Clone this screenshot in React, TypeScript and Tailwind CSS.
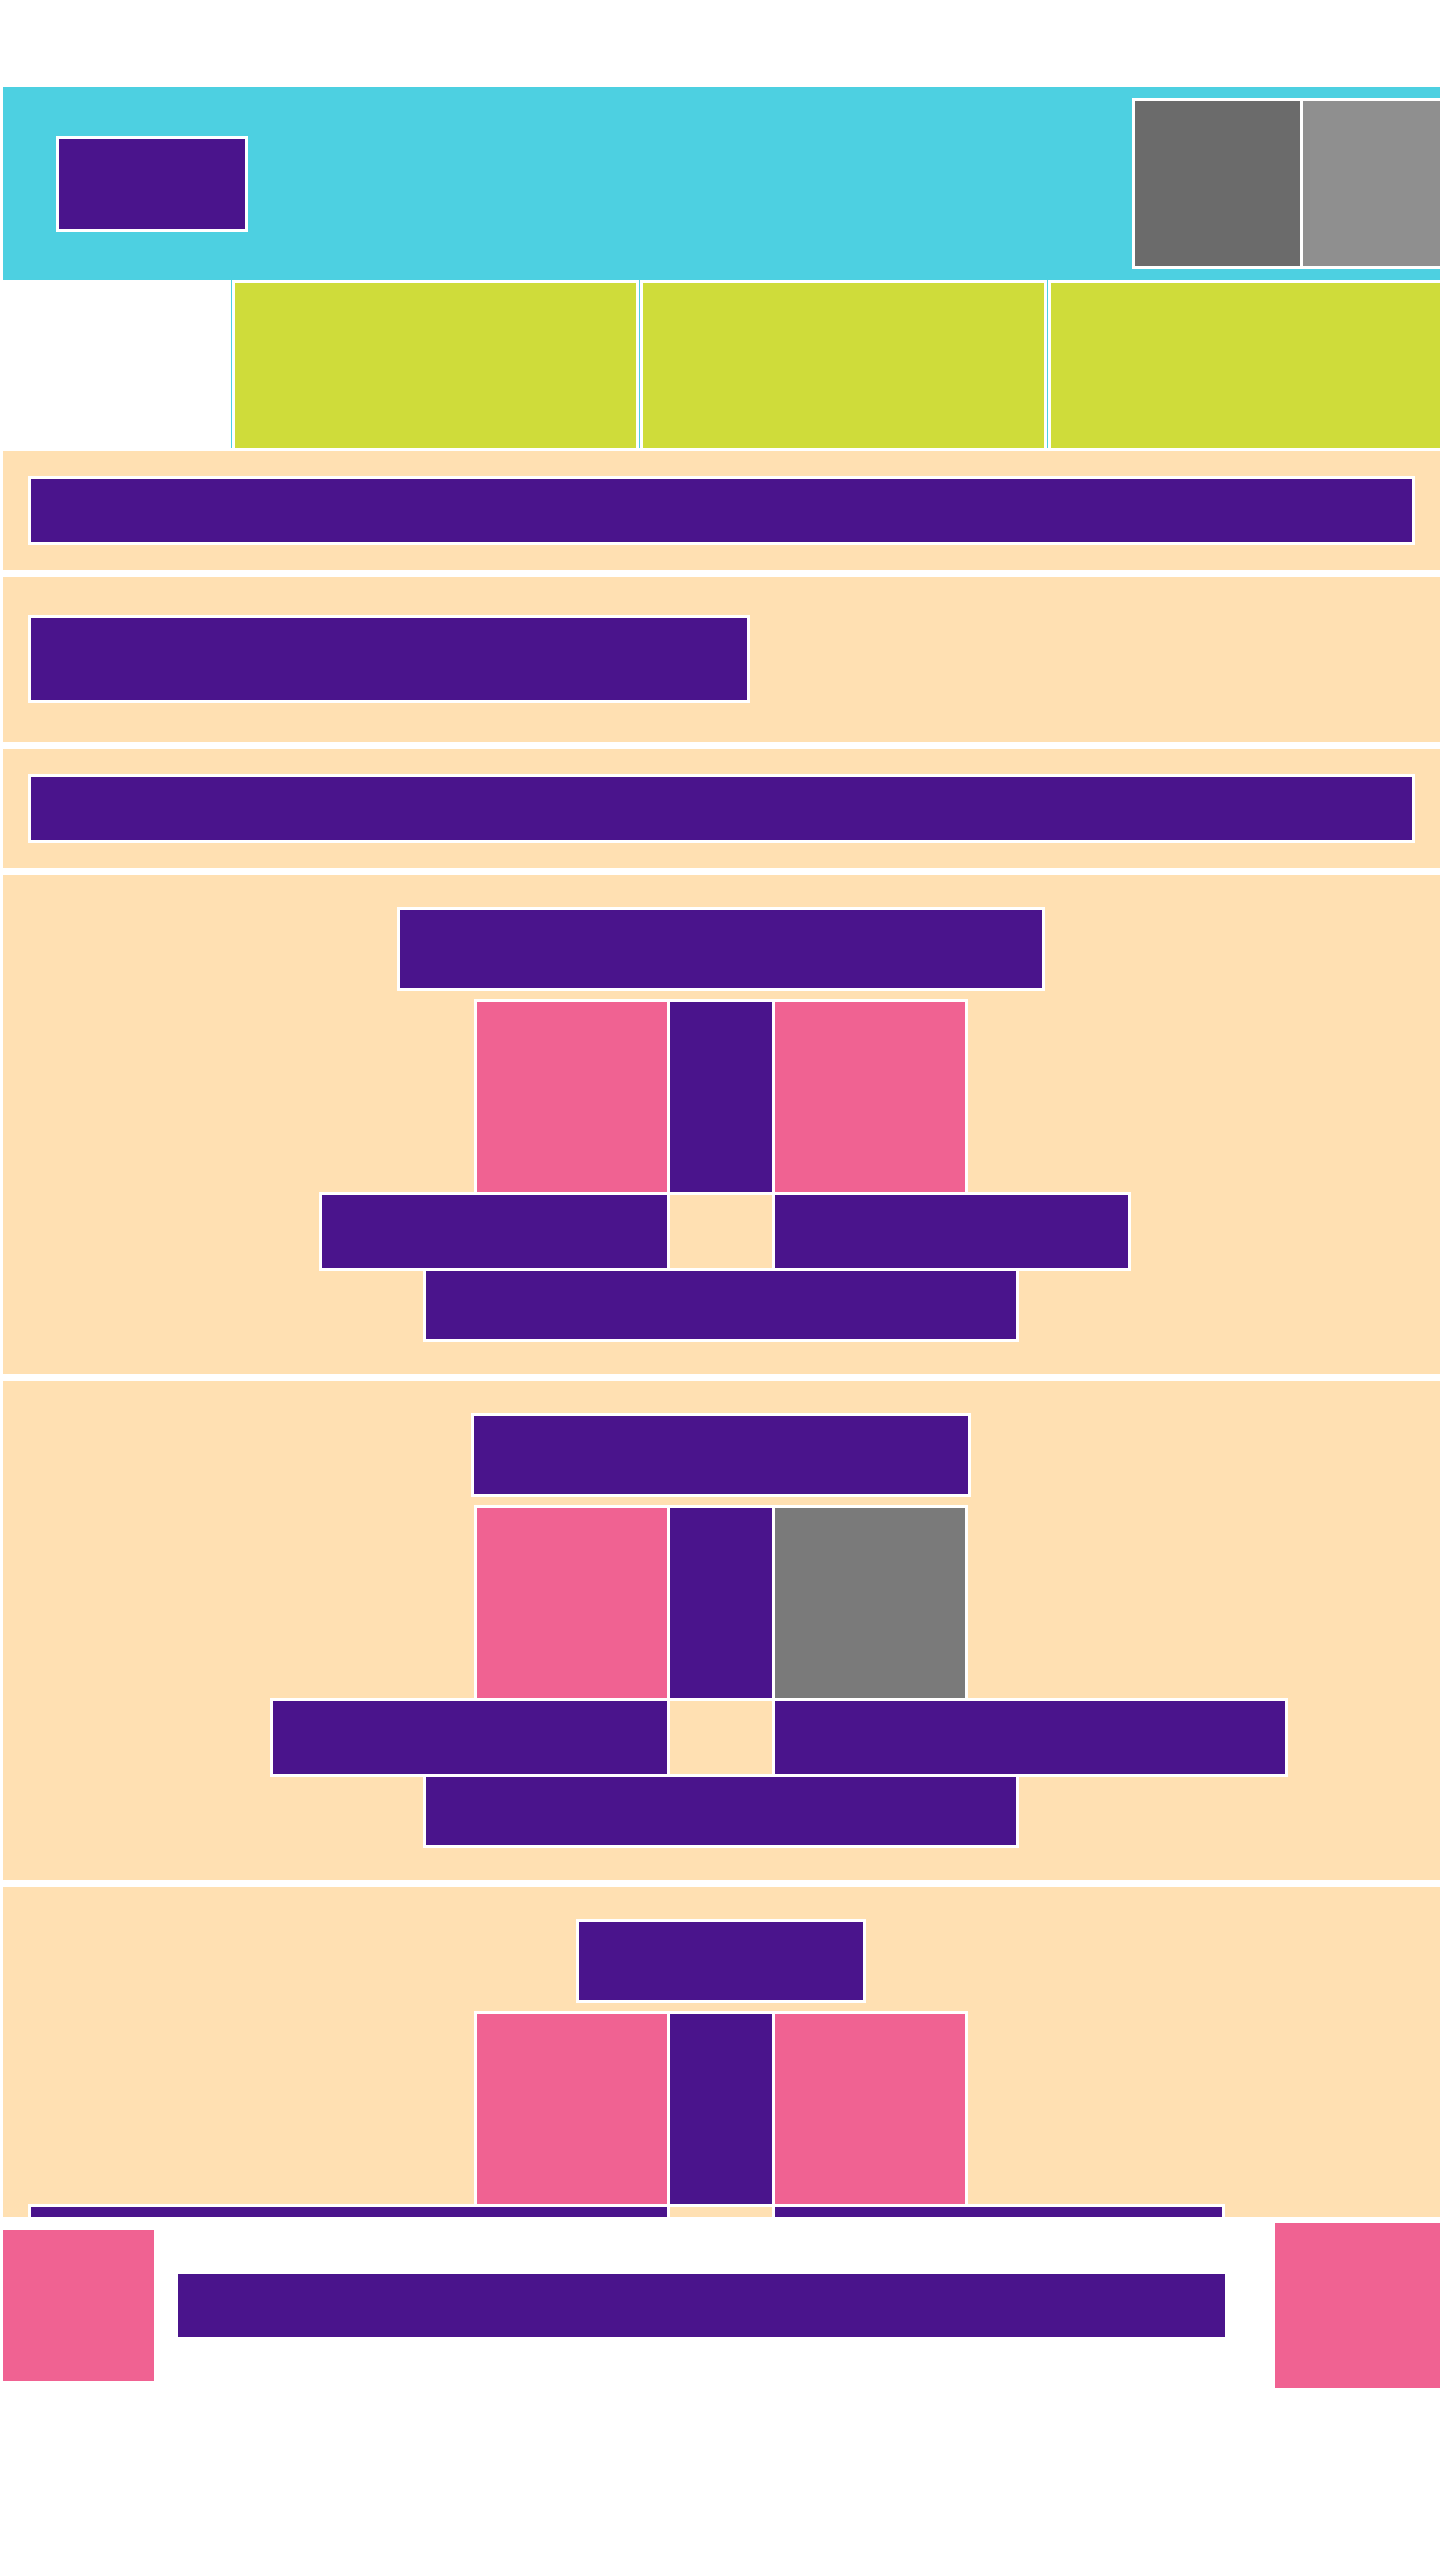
const purple = 'bg-[#4a148c]'
const pink = 'bg-[#f06292]'

function Box({ className = '' }: { className?: string }) {
  return <div className={`shrink-0 border-[3px] border-white ${className}`} />
}

type FigureProps = {
  titleWidth: string
  rightTop: string
  leftBottom: string
  rightBottom: string
  clipped?: boolean
}

function Figure({ titleWidth, rightTop, leftBottom, rightBottom, clipped }: FigureProps) {
  return (
    <section className={`mt-[7px] bg-[#ffe0b2] pt-[32px] ${clipped ? 'h-[330px] overflow-hidden' : 'pb-[32px]'}`}>
      <div className="flex w-[1436px] flex-col items-center">
        <Box className={`${titleWidth} h-[84px] ${purple}`} />

        {/* top row */}
        <div className="mt-[8px] grid w-full grid-cols-[667px_102px_667px]">
          <div className="flex justify-end">
            <Box className={`h-[196px] w-[196px] ${pink}`} />
          </div>
          <Box className={`-mx-[3px] h-[196px] ${purple}`} />
          <div className="flex justify-start">
            <Box className={`h-[196px] w-[196px] ${rightTop}`} />
          </div>
        </div>

        {/* bottom row */}
        <div className="-mt-[3px] grid w-full grid-cols-[667px_102px_667px]">
          <div className="flex justify-end">
            <Box className={`${leftBottom} h-[79px] ${purple}`} />
          </div>
          <div />
          <div className="flex justify-start">
            <Box className={`${rightBottom} h-[79px] ${purple}`} />
          </div>
        </div>

        <Box className={`-mt-[3px] h-[74px] w-[596px] ${purple}`} />
      </div>
    </section>
  )
}

export default function App() {
  return (
    <div className="min-h-[2560px] w-[1440px] overflow-hidden bg-white pl-[3px] pt-[87px]">

      {/* Header */}
      <header className="flex h-[193px] items-center bg-[#4dd0e1] pl-[53px]">
        <Box className={`h-[96px] w-[192px] ${purple}`} />
        <div className="ml-[884px] flex shrink-0 gap-[3px] bg-white p-[3px]">
          <div className="h-[165px] w-[165px] bg-[#6b6b6b]" />
          <div className="h-[165px] w-[165px] bg-[#8f8f8f]" />
        </div>
      </header>

      {/* Nav */}
      <nav className="flex h-[171px] pl-[228px]">
        {[0, 1, 2].map((i) => (
          <div key={i} className="flex shrink-0 items-start">
            <div className="h-[168px] w-px bg-[#4dd0e1]" />
            <Box className="h-[171px] w-[407px] bg-[#cfdc3a]" />
          </div>
        ))}
      </nav>

      {/* Bars */}
      <section className="bg-[#ffe0b2] p-[25px]">
        <Box className={`h-[69px] w-full ${purple}`} />
      </section>
      <section className="mt-[7px] bg-[#ffe0b2] px-[25px] pb-[39px] pt-[38px]">
        <Box className={`h-[88px] w-[722px] ${purple}`} />
      </section>
      <section className="mt-[7px] bg-[#ffe0b2] p-[25px]">
        <Box className={`h-[69px] w-full ${purple}`} />
      </section>

      {/* Figures */}
      <Figure titleWidth="w-[648px]" rightTop={pink} leftBottom="w-[351px]" rightBottom="w-[359px]" />
      <Figure titleWidth="w-[500px]" rightTop="bg-[#7a7a7a]" leftBottom="w-[400px]" rightBottom="w-[516px]" />
      <Figure titleWidth="w-[290px]" rightTop={pink} leftBottom="w-[642px]" rightBottom="w-[453px]" clipped />

      {/* Footer */}
      <footer className="mt-[6px] flex h-[165px] items-center">
        <div className={`h-[151px] w-[151px] shrink-0 ${pink}`} />
        <div className={`ml-[24px] h-[63px] w-[1047px] shrink-0 ${purple}`} />
        <div className={`ml-[50px] h-[165px] w-[165px] shrink-0 ${pink}`} />
      </footer>
    </div>
  )
}
